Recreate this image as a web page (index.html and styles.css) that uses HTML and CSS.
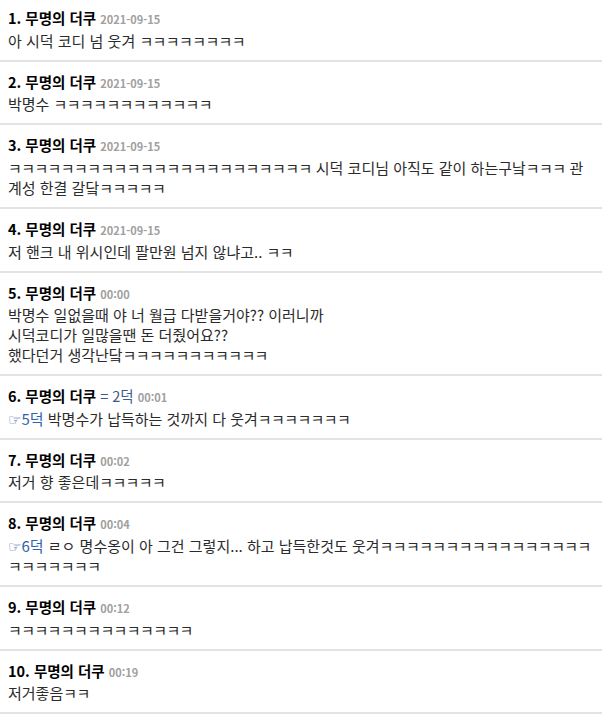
FILE: index.html
```html
<!DOCTYPE html>
<html lang="ko">
<head>
<meta charset="utf-8">
<title>댓글</title>
<link rel="stylesheet" href="styles.css">
</head>
<body>
<ul class="comments">
  <li class="comment">
    <div class="head"><span class="num">1.</span> <span class="nick">무명의 더쿠</span> <span class="date">2021-09-15</span></div>
    <div class="body">아 시덕 코디 넘 웃겨 <span class="k">ㅋㅋㅋㅋㅋㅋㅋㅋ</span></div>
  </li>
  <li class="comment">
    <div class="head"><span class="num">2.</span> <span class="nick">무명의 더쿠</span> <span class="date">2021-09-15</span></div>
    <div class="body">박명수 <span class="k">ㅋㅋㅋㅋㅋㅋㅋㅋㅋㅋㅋㅋ</span></div>
  </li>
  <li class="comment">
    <div class="head"><span class="num">3.</span> <span class="nick">무명의 더쿠</span> <span class="date">2021-09-15</span></div>
    <div class="body"><span class="k">ㅋㅋㅋㅋㅋㅋㅋㅋㅋㅋㅋㅋㅋㅋㅋㅋㅋㅋㅋㅋㅋㅋㅋ</span> 시덕 코디님 아직도 같이 하는구낰<span class="k">ㅋㅋㅋ</span> 관계성 한결 갈닼<span class="k">ㅋㅋㅋㅋㅋ</span></div>
  </li>
  <li class="comment">
    <div class="head"><span class="num">4.</span> <span class="nick">무명의 더쿠</span> <span class="date">2021-09-15</span></div>
    <div class="body">저 핸크 내 위시인데 팔만원 넘지 않냐고.. <span class="k">ㅋㅋ</span></div>
  </li>
  <li class="comment">
    <div class="head"><span class="num">5.</span> <span class="nick">무명의 더쿠</span> <span class="date">00:00</span></div>
    <div class="body">박명수 일없을때 야 너 월급 다받을거야?? 이러니까<br>시덕코디가 일많을땐 돈 더줬어요??<br>했다던거 생각난닼<span class="k">ㅋㅋㅋㅋㅋㅋㅋㅋㅋㅋㅋ</span></div>
  </li>
  <li class="comment">
    <div class="head"><span class="num">6.</span> <span class="nick">무명의 더쿠</span> <span class="ref">= 2덕</span> <span class="date">00:01</span></div>
    <div class="body"><span class="anchor"><span class="hand">☞</span>5덕</span> 박명수가 납득하는 것까지 다 웃겨<span class="k">ㅋㅋㅋㅋㅋㅋㅋ</span></div>
  </li>
  <li class="comment">
    <div class="head"><span class="num">7.</span> <span class="nick">무명의 더쿠</span> <span class="date">00:02</span></div>
    <div class="body">저거 향 좋은데<span class="k">ㅋㅋㅋㅋㅋ</span></div>
  </li>
  <li class="comment">
    <div class="head"><span class="num">8.</span> <span class="nick">무명의 더쿠</span> <span class="date">00:04</span></div>
    <div class="body"><span class="anchor"><span class="hand">☞</span>6덕</span> ㄹㅇ 명수옹이 아 그건 그렇지... 하고 납득한것도 웃겨<span class="k">ㅋㅋㅋㅋㅋㅋㅋㅋㅋㅋㅋㅋㅋㅋㅋㅋㅋㅋㅋㅋㅋㅋㅋ</span></div>
  </li>
  <li class="comment">
    <div class="head"><span class="num">9.</span> <span class="nick">무명의 더쿠</span> <span class="date">00:12</span></div>
    <div class="body"><span class="k">ㅋㅋㅋㅋㅋㅋㅋㅋㅋㅋㅋㅋㅋㅋ</span></div>
  </li>
  <li class="comment">
    <div class="head"><span class="num">10.</span> <span class="nick">무명의 더쿠</span> <span class="date">00:19</span></div>
    <div class="body">저거좋음<span class="k">ㅋㅋ</span></div>
  </li>
</ul>
</body>
</html>
```

FILE: styles.css
```css
html, body {
  margin: 0;
  padding: 0;
  background: #fff;
}

body {
  width: 602px;
  font-family: "Noto Sans CJK KR", "Noto Sans", sans-serif;
  color: #2b2b2b;
}

.comments {
  list-style: none;
  margin: 0;
  padding: 0;
}

.comment {
  padding: 10px 8px 9px 8px;
  border-bottom: 2px solid #e3e3e3;
}

.comment:first-child {
  padding-top: 8px;
}

.comment:nth-child(3),
.comment:nth-child(8) {
  padding-bottom: 9.5px;
}

.head {
  font-size: 14.5px;
  line-height: 19.5px;
  height: 19.5px;
  font-weight: bold;
  color: #000;
  white-space: nowrap;
}

.date {
  font-size: 11px;
  line-height: 1;
  font-weight: bold;
  color: #a0a0a0;
}

.ref {
  font-weight: normal;
  line-height: 1;
  color: #3d5a8e;
}

.body {
  margin-top: 3px;
  font-size: 15px;
  line-height: 20px;
  letter-spacing: 0;
  color: #2b2b2b;
}

.k {
  letter-spacing: -0.6px;
}

.anchor {
  color: #2f62ae;
}

.hand {
  font-family: "DejaVu Sans", sans-serif;
  font-size: 15px;
  font-weight: bold;
  line-height: 1;
  letter-spacing: 0;
}
```
